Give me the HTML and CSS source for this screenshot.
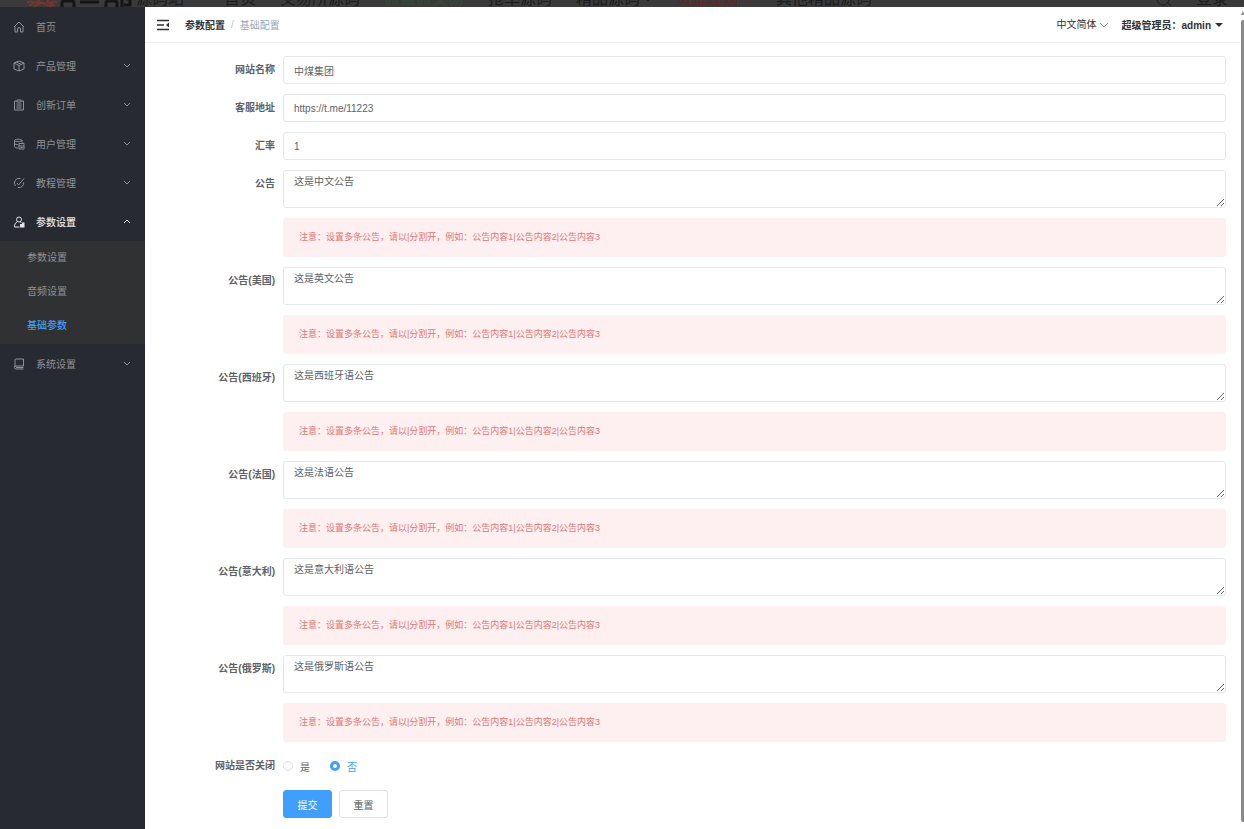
FILE: index.html
```html
<!DOCTYPE html>
<html lang="zh-CN">
<head>
    <meta charset="UTF-8">
    <meta name="viewport" content="width=device-width, initial-scale=1.0">
    <title>基础配置</title>
    <link rel="stylesheet" href="styles.css">
</head>
<body>

    <!-- Site bar behind the admin panel -->
    <div class="site-bar">
        <div class="site-logo">
            <svg width="108" height="8" viewBox="0 0 108 8" fill="none">
                <path d="M2 4C6 0 10 5 15 3L12 0H24L22 3C26 5 29 1 32 3M9 7C14 7 15 3 18 4C21 5 21 7 27 7M4 7L10 3M30 7L24 4" stroke="#78352f" stroke-width="2"/>
                <path d="M37 8V4Q37 2 39 2H47Q49 2 49 4V8M55 3H74M81 8V4Q81 2 83 2H90Q92 2 92 4V8M97 0V8M101 0H105V6H99" stroke="#151515" stroke-width="3"/>
            </svg>
            <span>源码站</span>
        </div>
        <nav class="site-nav">
            <a href="#">首页</a>
            <a href="#">交易所源码</a>
            <a href="#" class="green">微盘微交易</a>
            <a href="#">抢单源码</a>
            <a href="#">精品源码<svg class="arrow" viewBox="0 0 8 8"><path d="M0 1L4 5L8 1"/></svg></a>
            <a href="#" class="red">资金理财<svg class="arrow" viewBox="0 0 8 8"><path d="M0 1L4 5L8 1"/></svg></a>
            <a href="#">其他精品源码</a>
        </nav>
        <div class="site-user">
            <svg width="16" height="8" viewBox="0 0 16 8" fill="none" stroke="#1c1c1c"><path d="M1 0A6 6 0 0 0 13 0M11 3L15 7"/></svg>
            <a href="#">登录</a>
        </div>
    </div>

    <div class="layout">
        <!-- Sidebar -->
        <nav class="sidebar">
            <a href="#" class="menu-item">
                <svg class="icon" viewBox="0 0 12 12"><path d="M1 6L6 1L11 6M2 5.500V11H4.500V8A1.500 1.500 0 0 1 7.500 8V11H10V5.500"/></svg>
                <span>首页</span>
            </a>
            <a href="#" class="menu-item">
                <svg class="icon" viewBox="0 0 12 12"><path d="M6 1L11 3V9L6 11L1 9V3ZM1 3L6 5.500L11 3M6 5.500V11M3.500 2L8.500 4.500"/></svg>
                <span>产品管理</span>
                <svg class="arrow" viewBox="0 0 8 8"><path d="M1 2L4 5L7 2"/></svg>
            </a>
            <a href="#" class="menu-item">
                <svg class="icon" viewBox="0 0 12 12"><path d="M4 2H1.500V11H10.500V2H8M4 1H8V3H4ZM3.500 5H8.500M3.500 7H8.500M3.500 9H8.500"/></svg>
                <span>创新订单</span>
                <svg class="arrow" viewBox="0 0 8 8"><path d="M1 2L4 5L7 2"/></svg>
            </a>
            <a href="#" class="menu-item">
                <svg class="icon" viewBox="0 0 12 12"><path d="M9 4.500V2.500C9 .8 1.500.8 1.500 2.500V8.500C1.500 9.500 3 10 5 10M1.500 2.500C1.500 4 9 4 9 2.500M1.500 5.500C2 6.500 4 6.500 5 6.500M6 5.500H11V11H6ZM6 8H11M7.500 9.500H9.500"/></svg>
                <span>用户管理</span>
                <svg class="arrow" viewBox="0 0 8 8"><path d="M1 2L4 5L7 2"/></svg>
            </a>
            <a href="#" class="menu-item">
                <svg class="icon" viewBox="0 0 12 12"><path d="M7.500 1.500A4.700 4.700 0 0 0 2.500 9M5 10.500A4.700 4.700 0 0 0 10.700 5.500M4 6L5.500 8L11 1.500"/></svg>
                <span>教程管理</span>
                <svg class="arrow" viewBox="0 0 8 8"><path d="M1 2L4 5L7 2"/></svg>
            </a>
            <a href="#" class="menu-item opened">
                <svg class="icon" viewBox="0 0 12 12"><path d="M6 1A2.500 2.500 0 0 1 6 6A2.500 2.500 0 0 1 6 1ZM4 6C2 7 1.500 8.500 1.500 11H6.500M7.500 6L8.500 7"/><path d="M7 8H9V6.500H11.500V11.500H7Z" fill="currentColor" stroke="none"/></svg>
                <span>参数设置</span>
                <svg class="arrow" viewBox="0 0 8 8"><path d="M1 5L4 2L7 5"/></svg>
            </a>
            <div class="submenu">
                <a href="#">参数设置</a>
                <a href="#">音频设置</a>
                <a href="#" class="active">基础参数</a>
            </div>
            <a href="#" class="menu-item">
                <svg class="icon" viewBox="0 0 12 12"><path d="M2 9V2Q2 1 3 1H10.500V8H3Q1.500 8 1.500 9.500T3 11H10.500M3 9.500H10.500"/></svg>
                <span>系统设置</span>
                <svg class="arrow" viewBox="0 0 8 8"><path d="M1 2L4 5L7 2"/></svg>
            </a>
        </nav>

        <!-- Main Content -->
        <main class="main">
            <header class="header">
                <button type="button" class="fold" aria-label="收起菜单">
                    <svg width="12" height="12" viewBox="0 0 12 12" fill="none" stroke="#303133"><path d="M0 1.500H12M0 6H7M0 10.500H12" stroke-width="1.300"/><path d="M12 3.500V8.500L9 6Z" fill="#303133" stroke="none"/></svg>
                </button>
                <div class="breadcrumb">
                    <a href="#">参数配置</a>
                    <span class="slash">/</span>
                    <span class="current">基础配置</span>
                </div>
                <div class="lang">
                    <select aria-label="语言">
                        <option>中文简体</option>
                    </select>
                    <svg class="arrow" viewBox="0 0 8 8"><path d="M0 2L4 6L8 2"/></svg>
                </div>
                <button type="button" class="user">超级管理员：admin <span class="caret"></span></button>
            </header>

            <form class="config-form">
                <label for="siteName">网站名称</label>
                <input type="text" id="siteName" value="中煤集团">

                <label for="service">客服地址</label>
                <input type="text" id="service" value="https://t.me/11223">

                <label for="rate">汇率</label>
                <input type="text" id="rate" value="1">

                <label for="noticeCn">公告</label>
                <textarea id="noticeCn" rows="2">这是中文公告</textarea>
                <p class="alert">注意：设置多条公告，请以|分割开，例如：公告内容1|公告内容2|公告内容3</p>

                <label for="noticeUs">公告(美国)</label>
                <textarea id="noticeUs" rows="2">这是英文公告</textarea>
                <p class="alert">注意：设置多条公告，请以|分割开，例如：公告内容1|公告内容2|公告内容3</p>

                <label for="noticeEs">公告(西班牙)</label>
                <textarea id="noticeEs" rows="2">这是西班牙语公告</textarea>
                <p class="alert">注意：设置多条公告，请以|分割开，例如：公告内容1|公告内容2|公告内容3</p>

                <label for="noticeFr">公告(法国)</label>
                <textarea id="noticeFr" rows="2">这是法语公告</textarea>
                <p class="alert">注意：设置多条公告，请以|分割开，例如：公告内容1|公告内容2|公告内容3</p>

                <label for="noticeIt">公告(意大利)</label>
                <textarea id="noticeIt" rows="2">这是意大利语公告</textarea>
                <p class="alert">注意：设置多条公告，请以|分割开，例如：公告内容1|公告内容2|公告内容3</p>

                <label for="noticeRu">公告(俄罗斯)</label>
                <textarea id="noticeRu" rows="2">这是俄罗斯语公告</textarea>
                <p class="alert">注意：设置多条公告，请以|分割开，例如：公告内容1|公告内容2|公告内容3</p>

                <span class="form-label" id="closedLabel">网站是否关闭</span>
                <div class="radio-group" role="radiogroup" aria-labelledby="closedLabel">
                    <label class="radio"><input type="radio" name="closed" value="1"><span>是</span></label>
                    <label class="radio"><input type="radio" name="closed" value="0" checked><span>否</span></label>
                </div>

                <div class="form-actions">
                    <button type="submit" class="btn primary">提交</button>
                    <button type="reset" class="btn">重置</button>
                </div>
            </form>
        </main>

        <div class="scrollbar">
            <div class="scroll-up"></div>
            <div class="scroll-thumb"></div>
        </div>
    </div>

</body>
</html>
```
FILE: styles.css
```css
* {
    box-sizing: border-box;
}
body {
    font-family: "Liberation Sans", "Noto Sans CJK SC", sans-serif;
    font-size: 10px;
    margin: 0;
    color: #606266;
    background-color: #fff;
    display: flex;
    flex-direction: column;
    height: 100vh;
    overflow: hidden;
}
a {
    color: inherit;
    text-decoration: none;
}
button,
input,
select,
textarea {
    font-family: inherit;
    font-size: inherit;
    color: inherit;
}

/* Site bar */
.site-bar {
    flex: none;
    display: flex;
    align-items: flex-end;
    height: 7px;
    padding: 0 16px 0 25px;
    overflow: hidden;
    background-color: #3a3a3a;
    color: #1c1c1c;
    font-size: 16px;
    line-height: 16px;
}
.site-logo {
    display: flex;
    align-items: flex-end;
    gap: 3px;
}
.site-nav {
    display: flex;
    flex: 1;
    margin-left: 40px;
    gap: 24px;
}
.site-nav .arrow {
    margin-left: 4px;
}
.site-nav .green {
    color: #344a3a;
}
.site-nav .red {
    color: #6b2424;
}
.site-user {
    display: flex;
    align-items: flex-end;
    gap: 24px;
}

.layout {
    flex: 1;
    display: flex;
    min-height: 0;
}

/* Sidebar */
.sidebar {
    flex: none;
    width: 145px;
    background-color: #272b31;
    color: #8f9196;
}
.menu-item {
    display: flex;
    align-items: center;
    height: 39px;
    padding: 0 14px 0 13px;
}
.menu-item span {
    flex: 1;
    margin-left: 11px;
}
.icon {
    width: 12px;
    height: 12px;
    fill: none;
    stroke: currentColor;
}
.arrow {
    width: 8px;
    height: 8px;
    fill: none;
    stroke: currentColor;
}
.opened {
    color: #e6e6e6;
    font-weight: 500;
}
.submenu {
    padding-bottom: 1px;
    background-color: #303133;
}
.submenu a {
    display: block;
    padding-left: 27px;
    line-height: 34px;
}
.submenu .active {
    color: #409eff;
    font-weight: 500;
}

/* Header */
.main {
    flex: 1;
    min-width: 0;
}
.header {
    display: flex;
    align-items: center;
    height: 36px;
    padding: 0 18px 0 12px;
    border-bottom: 1px solid #f3f3f3;
    color: #303133;
}
.header button {
    display: flex;
    align-items: center;
    padding: 0;
    border: none;
    background: none;
    cursor: pointer;
}
.breadcrumb {
    display: flex;
    align-items: center;
    flex: 1;
    margin-left: 16px;
    gap: 6px;
}
.breadcrumb a {
    font-weight: 700;
}
.breadcrumb .slash {
    color: #c0c4cc;
}
.breadcrumb .current {
    color: #97a8be;
}
.lang {
    display: flex;
    align-items: center;
    gap: 3px;
    margin-right: 14px;
}
.lang select {
    appearance: none;
    padding: 0;
    border: none;
    background: none;
}
.lang .arrow {
    color: #909399;
}
.header .user {
    gap: 4px;
    font-weight: 700;
}
.caret {
    border: 4px solid transparent;
    border-top-color: #303133;
    border-bottom: none;
}

/* Form */
.config-form {
    display: grid;
    grid-template-columns: 130px 1fr;
    gap: 10px 8px;
    padding: 13px 15px 0 0;
}
.config-form > label,
.form-label {
    font-weight: 700;
    line-height: 28px;
    text-align: right;
}
.config-form input[type="text"],
.config-form textarea {
    width: 100%;
    padding: 0 10px;
    border: 1px solid #e4e7ec;
    border-radius: 3px;
    outline: none;
    background-color: #fff;
}
.config-form input[type="text"] {
    height: 28px;
}
.config-form textarea {
    display: block;
    height: 38px;
    padding: 3px 10px;
    line-height: 15px;
    resize: vertical;
}
.alert {
    grid-column: 2;
    margin: 0;
    padding: 0 16px;
    border-radius: 3px;
    background-color: #fef0f0;
    color: #e57575;
    font-size: 9px;
    line-height: 39px;
}
.radio-group {
    display: flex;
    align-items: center;
    gap: 20px;
}
.radio {
    display: flex;
    align-items: center;
    gap: 7px;
}
.radio input {
    appearance: none;
    width: 10px;
    height: 10px;
    margin: 0;
    border: 1px solid #dcdfe6;
    border-radius: 50%;
    background-color: #fff;
}
.radio input:checked {
    border: 3px solid #409eff;
}
.radio input:checked + span {
    color: #409eff;
}
.form-actions {
    grid-column: 2;
    display: flex;
    gap: 7px;
}
.btn {
    width: 49px;
    height: 28px;
    padding: 0;
    border: 1px solid #dcdfe6;
    border-radius: 3px;
    background-color: #fff;
    cursor: pointer;
}
.btn.primary {
    border-color: #409eff;
    background-color: #409eff;
    color: #fff;
}

/* Scrollbar */
.scrollbar {
    display: flex;
    flex-direction: column;
    gap: 5px;
    width: 3px;
    padding: 4px 0 7px;
}
.scroll-up {
    border: 2px solid transparent;
    border-top: none;
    border-bottom: 4px solid #8a8a8a;
}
.scroll-thumb {
    flex: 1;
    border-radius: 2px 0 0 2px;
    background-color: #8a8a8a;
}
```
